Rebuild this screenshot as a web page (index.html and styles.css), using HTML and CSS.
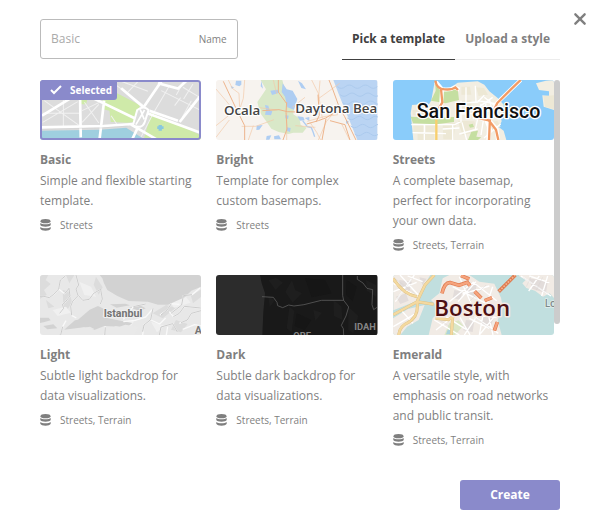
FILE: index.html
```html
<!DOCTYPE html>
<html lang="en">
<head>
<meta charset="utf-8">
<title>New style</title>
<link rel="stylesheet" href="styles.css">
</head>
<body>
<svg class="sprite" aria-hidden="true">
  <symbol id="stack" viewBox="0 0 11 12">
    <ellipse cx="5.5" cy="2.2" rx="5" ry="2.1"/>
    <path d="M.3 4C1.600 5.800 9.400 5.800 10.700 4V6C9.800 8.200 1.200 8.200.3 6zM.3 8C1.600 9.800 9.400 9.800 10.700 8V9.800C9.800 12.400 1.200 12.400.3 9.800z"/>
  </symbol>
</svg>
<main class="dialog">
  <button class="close" type="button" aria-label="Close">
    <svg viewBox="0 0 12 12"><path d="M2 2l8 8M10 2l-8 8"/></svg>
  </button>
  <header class="header">
    <div class="field">
      <input id="name" class="field-input" type="text" placeholder="Basic">
      <label class="field-label" for="name">Name</label>
    </div>
    <nav class="tabs">
      <a class="tab tab-active" href="#templates">Pick a template</a>
      <a class="tab" href="#upload">Upload a style</a>
    </nav>
  </header>

  <section class="scroller" id="templates">
    <div class="grid">
      <label class="card">
        <input class="card-radio" type="radio" name="template" checked>
        <span class="thumb thumb-selected">
          <svg class="map" viewBox="12 18 483 180" preserveAspectRatio="xMidYMid slice">
            <path fill="#dcdcdc" d="M12 18h484v180H12z"/>
            <path fill="#cfeaa9" d="M130 75h24l-4 16h-18zM200 78l40-22 72 38-20 50-20 2-40-2h-8l-4-34-20-4zM345 116l150 68v14H322z"/>
            <path fill="#9fcfdf" d="M12 170l180-3 78-6 58 37H12z"/>
            <g fill="none" stroke="#f1f1f1" stroke-width="3">
              <path d="M25 80l105 75M20 145l105-62M82 75v83M20 118h110M138 110l50-24M138 145l50-54M145 85l43 62M235 30l85 63M255 22l80 30M270 60l38-40M375 50l120 60M400 35l-50 85M445 18l-25 45M470 30l-28 45M415 95l18-24M465 80l-27 50M440 40l50 30M350 120l-35 68M225 125l20 30"/>
            </g>
            <g fill="none" stroke="#fff" stroke-width="8">
              <path d="M12 160l190-4 90-6M132 70l2 120M204 80l-14 118M155 65l145 70M18 125l90-55M378 18l-58 85M305 107l190 70M255 43l65 55M495 62l-65 82M365 28l60 16 28-26M340 110l85 30M285 152l80 46M305 160l-18 38"/>
            </g>
            <path fill="none" stroke="#c8c8c8" d="M18 166l180-4 76-6"/>
            <path fill="#ddd" stroke="#fff" stroke-width="6" d="M303 108q20-15 34 0l-12 38q-8 20-35 8z"/>
            <path fill="none" stroke="#fff" stroke-width="5" d="M325 108l-26 44M312 106l12 30"/>
            <path fill="#89c8df" d="M367 153h10v4h5v8h-5v5h-10v-5h-4v-8h4z"/>
          </svg>
          <span class="badge">
            <svg class="badge-icon" viewBox="0 0 12 12"><path d="M1 6l3 3 7-7"/></svg>
            Selected
          </span>
        </span>
        <strong class="card-title">Basic</strong>
        <span class="card-text">Simple and flexible starting template.</span>
        <span class="meta"><svg class="meta-icon"><use href="#stack"/></svg>Streets</span>
      </label>

      <label class="card">
        <input class="card-radio" type="radio" name="template">
        <span class="thumb">
          <svg class="map" viewBox="18 18 484 180" preserveAspectRatio="xMidYMid slice">
            <path fill="#f7f3ef" d="M18 18h484v180H18z"/>
            <path fill="#d9e8c8" d="M152 18h65l10 38 28 20-5 45 18 12 4 20 18 8-12 15h-28l-14 4-30-6-22-10-18-26-16-22-8-32 18-26 8-12z"/>
            <path fill="#bad4f3" d="M370 18h132v180h-60l-18-45-20-48-18-45z"/>
            <path fill="none" stroke="#accaed" stroke-width="3" d="M382 38q12 10 24 0t24 0 24 0 24 0 24 0M390 62q12 10 24 0t24 0 24 0 24 0 24 0M398 86q12 10 24 0t24 0 24 0 24 0 24 0M412 132q12 10 24 0t24 0 24 0 24 0M422 156q12 10 24 0t24 0 24 0 24 0M434 180q12 10 24 0t24 0 24 0"/>
            <path fill="#aecdf2" d="M78 20h16v12l-6 5-12-4zM154 20l5 24-7-7zM218 28l12 18 18 4 14 25-10 32-20-7-7-32-10-14zM264 20l12 8 12 18-14-4zM181 50l22-3 3 10-20 6zM165 93l10 2 4 14 8 3-4 12-18-2 3-15zM226 123l10 2-2 10-8-2zM230 160l12 2-2 12-10-4zM140 155l18-2-10 14-9 1zM170 186l14-2-6 13h-10zM192 187l15-3 6 12h-20zM262 127l18 2 4 10-14 1zM284 132l14-3v12zM62 36l10 4-6 5zM408 139l8 3-2 8-6-2z"/>
            <path fill="none" stroke="#aecdf2" stroke-width="4" d="M278 140l14 18 12 3 5 12 5 15"/>
            <g fill="none" stroke="#f3c9a8" stroke-width="2">
              <path d="M55 18l12 25 20 15 2 45M18 45l30 35 24 30M104 18l-4 55-10 30M18 155l50-40M95 157h42l55-20M130 155l-15 43M18 190l40-52M140 100l60 8M230 84v114M330 20l-5 60M324 75l65-47M305 18l20 40 12 75M190 18l10 42M300 145l20 30 12 23M325 198l24-55 20-24 50-5M395 150l24 48M256 155l60 5M292 142l50-14 42-6M285 70l-38 30"/>
            </g>
            <g fill="none" stroke="#edb48c" stroke-width="3">
              <path d="M40 22l28 60 22 45 14 28v43M205 18v36l25 35M157 110l50-3 25 6 56 2M230 85l-2 30 3 50-12 33M357 18l12 30 20 55 15 25 34 70M290 150l35-10 22-8 30-18M348 134l-12 64M360 140l45 12 15 46M324 62l4 62-10 20"/>
            </g>
            <g class="town town-bright"><text x="42" y="124">Ocala</text><text x="256" y="116">Daytona Bea</text></g>
          </svg>
        </span>
        <strong class="card-title">Bright</strong>
        <span class="card-text">Template for complex custom basemaps.</span>
        <span class="meta"><svg class="meta-icon"><use href="#stack"/></svg>Streets</span>
      </label>

      <label class="card">
        <input class="card-radio" type="radio" name="template">
        <span class="thumb">
          <svg class="map" viewBox="21 18 484 180" preserveAspectRatio="xMidYMid slice">
            <path fill="#8accfa" d="M21 18h484v180H21z"/>
            <path fill="#f2eee2" d="M147 18l10 18 30 10 28-20 60-4 20 10 15 20 25 20 18 20v22l-10 10 4 18-8 18 14 10 8 28H82l-8-80 4-25 26-2 20 8 12-20zM450 28l30-8 25-2v90l-32-10-4-34 20 2v-14l-30-4z"/>
            <path fill="#ede8d5" d="M226 38h26l4 24h-30zM270 40l24 2 12 20-28 4zM226 80l30-2v26h-30zM80 108h60v16H80zM82 154h32v20H82zM120 154h28v20h-28zM95 180h50v18H95zM170 152l40-6-8 50h-30zM215 140l50 2 10 30-45 12zM312 145l22-5 10 18-28 10zM472 66l33-2v42l-28-8z"/>
            <path fill="#c5dfa1" d="M147 18l12 18 28 12 28-4 4 34-40 10-44-8 14-30zM74 128l74 3 56-2v15l-53 7-70-3zM248 152l12-3 4 10-12 2zM246 198l10-25 20-3-5 18 15 2-10 8z"/>
            <g fill="none" stroke="#fff" stroke-width="4">
              <path d="M76 152h130l20-10M80 176l100 3M115 152v46M220 88l55-4 20-20M216 120l55-2M225 80v65M240 40v75M268 35l2 50M285 90l-18 80M300 88l-15 95M310 75l10 42 18 3M275 80l60 10M260 135l60-30M200 150v48M228 145l14 53M170 165l50-3M320 70l-48 34M330 98l-35-28M344 150l-50 42M220 180l55-15"/>
            </g>
            <g fill="none" stroke-linejoin="round">
              <path stroke="#fff" stroke-width="12" d="M150 24l18 22-3 60M172 46q20 3 34-6l14 7M404 18l-70 68-24 45-3 67M268 130l32 6 14 36M310 140l22 25 4 33"/>
              <path stroke="#f29b65" stroke-width="7" d="M148 20q4 26 28 26 22 2 32-6l8 8M165 45l4 40-17 30v15M404 18l-30 29-40 40-22 45-3 66M268 130l40 9 22 28 7 31"/>
              <path stroke="#f8cf6d" stroke-width="7" d="M151 122v76"/>
            </g>
            <g class="town town-streets"><text x="92" y="132">San Francisco</text></g>
          </svg>
        </span>
        <strong class="card-title">Streets</strong>
        <span class="card-text">A complete basemap, perfect for incorporating your own data.</span>
        <span class="meta"><svg class="meta-icon"><use href="#stack"/></svg>Streets, Terrain</span>
      </label>

      <label class="card">
        <input class="card-radio" type="radio" name="template">
        <span class="thumb">
          <svg class="map" viewBox="12 15 484 180" preserveAspectRatio="xMidYMid slice">
            <path fill="#e8e8e8" d="M12 15h484v180H12z"/>
            <path fill="#dcdcdc" d="M12 15h25l-8 15 15 12-20 18 8 14-20 12zM80 60l20 5 8 32-14 22-12-10zM30 90l25 20-18 5zM350 130l40-25 30 8-40 32zM420 150l35 12-20 25-30-8zM465 78l31-20v22l-25 20zM180 20l20 32-12 22-15-30zM90 15h25l-15 25z"/>
            <path fill="#f0f0f0" d="M50 120l40-10 15 18-40 10zM130 35l35 15 15 30-35-5zM235 160l60-8-15 25-45 4zM400 90l50-10 14 18-50 15zM345 155l40 12-22 20z"/>
            <path fill="#d2d2d2" d="M191 15h305v35l-30 12-20 20-50 22-30 0-30-9-58-2-34-15-30-18-10-20-5-15zM126 149l35-30 25-11 17 8-3 25 24 5 65 13-18 15-32-5-25 9h-38l-14-8-34 5-23 20H70l21-22 26-22zM12 143h26l6 8-18 5-14 3zM22 168l30-5 12 12-30 3zM222 103l46-2 14 5-40 7zM280 112l34-5 15 8-18 8zM162 182l25-8 12 14-20 7z"/>
            <path fill="#e9e9e9" d="M175 180l30-12 45 2 18-6 38 6-12 25H70l14-16 60-7z"/>
            <g fill="none" stroke="#f9f9f9" stroke-width="4" stroke-linejoin="round">
              <path d="M12 79h12l16 4 13-10 15-16 5-27 15-12M68 57l18 14 13-16 3 23-14 18-9 7 4 12-12 15M120 15l8 30-8 12 6 20-16 17-6 15 3 27 14 8M128 77l12 14 20-3 13-18 21-12M194 58l5 29-6 15M262 148l30-38 37-8M262 155l35-4 32-10 22-25M320 195l4-30 20-16 7-34M345 150l26 12 18-18M370 195l5-24 35-10 14 25M372 135l22-16 12-18 24 2M405 130l32-25 5-28 26-3 24-20M400 125l12 15 18-10 15-21 49 5M430 160l24-10 12-20 29-8M90 152l-10 18-6 25M205 195l3-26M395 170l-4 25M440 178l36-14 20 4"/>
            </g>
            <g fill="none" stroke="#b3b3b3" stroke-width="2" stroke-linejoin="round">
              <path d="M12 79h12l16 4 13-10 15-16 5-27 15-12M86 71l13-16 3 23-14 18-9 7 4 12-12 15M120 15l8 30-8 12 6 20-16 17-6 15 3 27M128 77l12 14 20-3 13-18 21-12 5 29-6 15M292 110l37-8M320 185l4-20 20-16 7-34M370 195l5-24 35-10 14 25M375 135l19-16 12-18M405 130l32-25 5-28 26-3M412 140l18-10 15-21 49 5M435 158l19-8 12-20 29-8M80 170l-6 25M206 195l2-23"/>
            </g>
            <g class="town town-light"><text x="203" y="140">Istanbul</text><text x="476" y="193">A</text></g>
          </svg>
        </span>
        <strong class="card-title">Light</strong>
        <span class="card-text">Subtle light backdrop for data visualizations.</span>
        <span class="meta"><svg class="meta-icon"><use href="#stack"/></svg>Streets, Terrain</span>
      </label>

      <label class="card">
        <input class="card-radio" type="radio" name="template">
        <span class="thumb">
          <svg class="map" viewBox="18 15 484 180" preserveAspectRatio="xMidYMid slice">
            <path fill="#2c2c2c" d="M18 15h484v180H18z"/>
            <path fill="#191919" d="M150 15h352v180H157l3-70 5-55-10-30z"/>
            <path fill="#1e1e1e" d="M175 30l24-7 20 15-22 22zM226 65l20-35 10 30 20 10-28 28zM238 110l15 12-8 65-15-12zM370 90l25 20 2 40-25-12zM415 110l30 28-15 52-15-10zM468 30l30 15v35l-28-18zM310 120l26 8-20 25zM175 80l20 10-16 22z"/>
            <path fill="#161616" d="M285 25l60 5 20 40-60 12zM260 130l44 20-20 30-30-12zM410 30l30 20-12 44-20-20z"/>
            <path fill="none" stroke="#6a6a6a" stroke-width="2" stroke-linejoin="round" d="M156 80l34 2 11 15 2 10 15 6 18-8 16 3 30-4 52-13h67M398 15v62l3 14 15 20-8 27-14 28 6 10 1 19M442 18v10l17 11 12 16 17 4-2 45 5 15 10-7"/>
            <g class="region"><text x="433" y="180">IDAH</text><text x="250" y="208">ORE</text></g>
          </svg>
        </span>
        <strong class="card-title">Dark</strong>
        <span class="card-text">Subtle dark backdrop for data visualizations.</span>
        <span class="meta"><svg class="meta-icon"><use href="#stack"/></svg>Streets, Terrain</span>
      </label>

      <label class="card">
        <input class="card-radio" type="radio" name="template">
        <span class="thumb">
          <svg class="map" viewBox="21 15 484 180" preserveAspectRatio="xMidYMid slice">
            <path fill="#c1dfdf" d="M21 15h484v180H21z"/>
            <path fill="#f1ebe5" d="M21 15h112l-15 24-20 40-6 14-70 28zM21 145l45-28 50-12-18 45-35 20-20 25H21zM190 15h60l30 20 45 6 20 42 5 28-15 40 12 44H128l12-50 25-25-30-30 25-20 10-45zM400 15h105v70l-14-15-20 10-24-18-26-8-12-14 10-10-20-12z"/>
            <path fill="#e2dcda" d="M40 30l38 5-8 30-28-5zM100 22l22 4-12 20zM30 80l30-10 8 22-25 10zM245 35l28 8-8 34-25-5zM205 60l25 5-8 24-22-5zM290 130l35 8-10 30-28-6zM430 25l55 10-5 35-42-14zM240 150l25 2-5 34-28-5z"/>
            <path fill="#dbe7c6" d="M190 160l28-9 14 16-25 28h-32z"/>
            <path fill="#aad3dc" d="M185 180l15-7-8 20h-12z"/>
            <g fill="none" stroke="#fff" stroke-width="4">
              <path d="M22 40l72 40M42 15l55 60M85 15L28 95M22 65l70-28M110 35L65 18M22 170l72-42M45 120l36 40M145 150l75 45M150 180l58-46M180 140l60 38M190 95l72-58 70 55M200 50l100 50M220 20l35 80M270 35l-54 60M230 72l80-24M265 140l72 50M280 195l45-55M235 195l40-60 57 8M250 145l60 30M292 130l-12 65M305 125l16 70M222 142l30 53M320 50l-20 60M405 18l90 60M430 18l60 20M460 18l-32 45M485 18l-18 60"/>
            </g>
            <path fill="none" stroke="#d0cecd" stroke-width="1" d="M26 25l60 45M80 25l-48 64M160 150l60 38M220 35l55 55M300 45l-50 50M250 130l74 54M410 22l75 48M435 20l-14 30M470 22l-20 40"/>
            <g fill="none" stroke-linejoin="round">
              <path stroke="#d9bd83" stroke-width="9" d="M21 25q30 48 72 55M145 15l-28 30-24 50 50 8M92 96l-70 38M94 98q4 42-28 60-25 10-28 37M205 137l-18 12-38-4M200 142l-4 53"/>
              <path stroke="#f4d99f" stroke-width="7" d="M21 25q30 48 72 55M145 15l-28 30-24 50 50 8M92 96l-70 38M94 98q4 42-28 60-25 10-28 37M205 137l-18 12-38-4M200 142l-4 53"/>
              <path stroke="#de7b50" stroke-width="11" d="M168 70q8-35 26-32l25 8 25-9 8 10M225 17l25 10M388 15l-50 50M266 64l20 20M296 92l22-9M325 182l9-26"/>
              <path stroke="#f6a47d" stroke-width="7" d="M168 70q8-35 26-32l25 8 25-9 8 10M225 17l25 10M266 64l20 20M296 92l22-9M325 182l9-26"/>
              <path stroke="#f6b38f" stroke-width="5" stroke-dasharray="5 4" d="M388 15l-50 50"/>
            </g>
            <g class="town town-emerald"><text x="145" y="137">Boston</text></g>
            <g class="town town-small"><text x="476" y="110">Lo</text></g>
          </svg>
        </span>
        <strong class="card-title">Emerald</strong>
        <span class="card-text">A versatile style, with emphasis on road networks and public transit.</span>
        <span class="meta"><svg class="meta-icon"><use href="#stack"/></svg>Streets, Terrain</span>
      </label>
    </div>
    <div class="scroll-thumb"></div>
  </section>

  <footer class="footer">
    <button class="create" type="button">Create</button>
  </footer>
</main>
</body>
</html>
```
FILE: styles.css
```css
* {
  box-sizing: border-box;
}

body {
  margin: 0;
  background: #fff;
  color: #7f7f7f;
  font: 12px/20px "Open Sans", sans-serif;
}

.sprite {
  position: absolute;
  width: 0;
  height: 0;
}

.dialog {
  position: relative;
  padding: 19px 39px 16px 40px;
}

.close {
  position: absolute;
  top: 12px;
  right: 12px;
  width: 14px;
  height: 14px;
  padding: 0;
  border: 0;
  background: none;
}

.close svg {
  display: block;
  fill: none;
  stroke: #7f7f7f;
  stroke-width: 2;
  stroke-linecap: round;
}

.header {
  display: flex;
  justify-content: space-between;
  align-items: flex-start;
  margin-bottom: 20px;
}

.field {
  display: flex;
  align-items: center;
  width: 38%;
  height: 40px;
  padding: 0 10px;
  border: 1px solid #bbb;
  border-radius: 3px;
}

.field-input {
  flex: 1;
  min-width: 0;
  padding: 0;
  border: 0;
  outline: 0;
  background: none;
  color: #7f7f7f;
  font: inherit;
}

.field-input::placeholder {
  color: #aaa;
}

.field-label {
  font-size: 10px;
}

.tabs {
  display: flex;
}

.tab {
  padding: 10px;
  border-bottom: 1px solid #ececec;
  color: #7f7f7f;
  font-weight: 700;
  text-decoration: none;
}

.tab-active {
  border-color: #404040;
  color: #404040;
}

.scroller {
  position: relative;
  padding-right: 6px;
}

.scroll-thumb {
  position: absolute;
  top: 0;
  right: 0;
  width: 6px;
  height: 66%;
  border-radius: 3px;
  background: #ccc;
}

.grid {
  display: grid;
  grid-template-columns: repeat(3, 1fr);
  gap: 20px 15px;
}

.card {
  display: flex;
  flex-direction: column;
}

.card-radio {
  position: absolute;
  opacity: 0;
}

.thumb {
  position: relative;
  height: 60px;
  margin-bottom: 10px;
  overflow: hidden;
  border-radius: 3px;
}

.thumb-selected::after {
  content: "";
  position: absolute;
  inset: 0;
  border: 2px solid #8a8acb;
  border-radius: 3px;
}

.map {
  display: block;
  width: 100%;
  height: 100%;
}

.badge {
  position: absolute;
  top: 0;
  left: 0;
  display: flex;
  align-items: center;
  gap: 8px;
  height: 20px;
  padding: 0 5px 0 10px;
  border-radius: 3px 0 3px 0;
  background: #8a8acb;
  color: #fff;
  font-size: 10px;
  font-weight: 700;
}

.badge-icon {
  width: 12px;
  height: 12px;
  fill: none;
  stroke: #fff;
  stroke-width: 2;
}

.card-title {
  margin-bottom: 1px;
}

.card-text {
  margin-bottom: 4px;
}

.meta {
  display: flex;
  align-items: center;
  gap: 9px;
  font-size: 10px;
}

.meta-icon {
  width: 11px;
  height: 12px;
  fill: #7f7f7f;
}

.town {
  paint-order: stroke;
  stroke-linejoin: round;
}

.town-bright {
  fill: #444;
  stroke: #fff;
  stroke-width: 7px;
  font: 600 40px "Open Sans", sans-serif;
}

.town-streets {
  fill: #111;
  stroke: #fff;
  stroke-width: 8px;
  font: 500 59px Roboto, sans-serif;
}

.town-light {
  fill: #747474;
  stroke: #efefef;
  stroke-width: 6px;
  font: 700 32px Roboto, sans-serif;
}

.town-emerald {
  fill: #4d1013;
  stroke: #f6eae4;
  stroke-width: 9px;
  font: 600 67px "Open Sans", sans-serif;
}

.town-small {
  fill: #7d8a8a;
  stroke: #e3eeee;
  stroke-width: 5px;
  font: 600 30px "Open Sans", sans-serif;
}

.region {
  fill: #858585;
  font: 700 28px Roboto, sans-serif;
}

.footer {
  display: flex;
  justify-content: flex-end;
  margin-top: 30px;
}

.create {
  width: 100px;
  height: 30px;
  border: 0;
  border-radius: 3px;
  background: #8a8acb;
  color: #fff;
  font: inherit;
  font-weight: 700;
}
```
